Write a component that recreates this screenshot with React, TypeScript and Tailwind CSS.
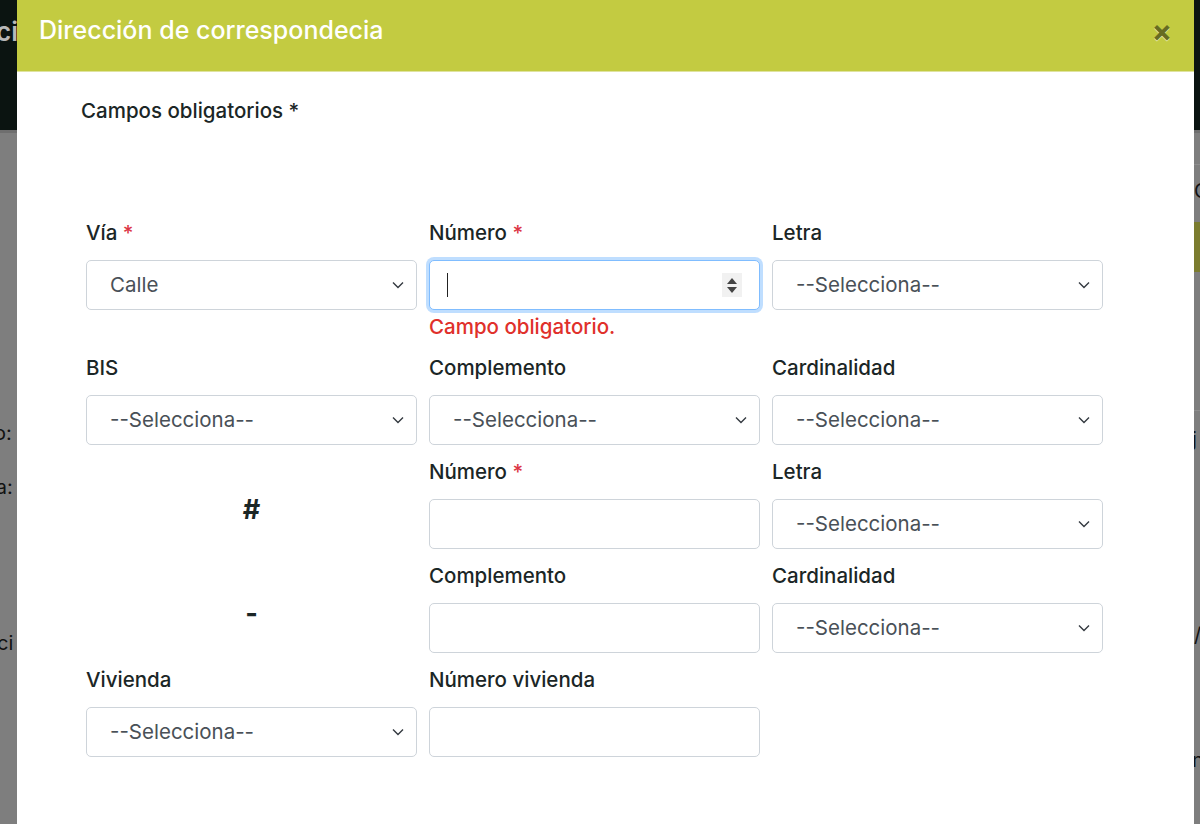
import React from 'react';

const font = { fontFamily: 'Inter, "Noto Sans", sans-serif' };

function Chevron() {
  return (
    <svg width="12" height="8" viewBox="0 0 12 8" className="absolute right-[12px] top-1/2 -translate-y-1/2">
      <path d="M1 1.5 L6 6.5 L11 1.5" fill="none" stroke="#343a40" strokeWidth="1.4" />
    </svg>
  );
}

function Select({ value = '--Selecciona--' }: { value?: string }) {
  return (
    <div className="relative h-[50px] rounded-[5px] border border-[#ced4da] bg-white flex items-center pl-[23px] text-[20.5px] text-[#495057]">
      {value}
      <Chevron />
    </div>
  );
}

function Input({ focused = false }: { focused?: boolean }) {
  if (focused) {
    return (
      <div className="relative h-[50px] rounded-[5px] border border-[#80bdff] bg-white shadow-[0_0_0_3px_rgba(0,123,255,0.25)] flex items-center pl-[17px]">
        <span className="w-[1px] h-[24px] bg-[#222]" />
        <span className="absolute right-[17px] top-1/2 -translate-y-1/2 w-[20px] h-[24px] bg-[#f1f1f1] flex flex-col items-center justify-center gap-[3px]">
          <span className="w-0 h-0 border-l-[5px] border-r-[5px] border-b-[6px] border-l-transparent border-r-transparent border-b-[#444]" />
          <span className="w-0 h-0 border-l-[5px] border-r-[5px] border-t-[6px] border-l-transparent border-r-transparent border-t-[#444]" />
        </span>
      </div>
    );
  }
  return <div className="h-[50px] rounded-[5px] border border-[#ced4da] bg-white" />;
}

function Label({ text, required = false }: { text: string; required?: boolean }) {
  return (
    <div className="h-[28px] leading-[28px] mb-[13px] text-[20.5px] font-medium text-[#1b2626]">
      {text}
      {required && <span className="text-[#dc3545]"> *</span>}
    </div>
  );
}

function Field({ label, required, children }: { label: string; required?: boolean; children: React.ReactNode }) {
  return (
    <div className="flex flex-col">
      <Label text={label} required={required} />
      {children}
    </div>
  );
}

function Symbol({ char }: { char: string }) {
  return (
    <div className="flex items-center justify-center pt-[14px] text-[27px] font-bold text-[#1b2626]">
      {char}
    </div>
  );
}

export default function App() {
  return (
    <div className="relative w-full h-[824px] overflow-hidden bg-[#7e7e7e]" style={font}>
      {/* dimmed page behind the modal */}
      <div className="h-[133px] bg-[#0b1411] border-b-[3px] border-[#6e6e6e] text-[26px] font-semibold text-[#b8b8b8] pt-[12px]">
        <span className="-ml-[4px]">ci</span>
      </div>
      <div className="absolute left-[-6px] top-[418px] text-[20px] text-[#111]">o:</div>
      <div className="absolute left-[-9px] top-[472px] text-[20px] text-[#111]">ia:</div>
      <div className="absolute left-[-3px] top-[628px] text-[20px] text-[#111]">ci</div>
      <div className="absolute left-[1194px] top-[135px] w-[6px] h-[30px] border-b border-[#8d8d8d]" />
      <div className="absolute left-[1194px] top-[176px] text-[20px] text-[#111]">O</div>
      <div className="absolute left-[1194px] top-[222px] w-[6px] h-[50px] bg-[#7b7c2f]" />
      <div className="absolute left-[1194px] top-[410px] w-[6px] border-b border-[#8d8d8d]" />
      <div className="absolute left-[1192px] top-[424px] text-[20px] text-[#111]">j</div>
      <div className="absolute left-[1194px] top-[620px] text-[20px] text-[#111]">/</div>
      <div className="absolute left-[1192px] top-[745px] text-[20px] text-[#111]">n</div>

      {/* modal */}
      <div className="absolute left-[17px] top-0 w-[1177px] h-[900px] bg-white">
        <div className="h-[72px] bg-[#c3cb41] border-b border-[#dfe3a0] flex items-center justify-between pl-[22px] pr-[22px] pb-[10px]">
          <span className="text-[25px] font-medium text-white">Dirección de correspondecia</span>
          <span className="text-[30px] font-bold leading-none text-[#676c22] [text-shadow:0_1px_0_#e9ecb0]">×</span>
        </div>
        <div className="pt-[25px] pl-[64px]">
          <div className="h-[28px] leading-[28px] text-[20.5px] font-medium text-[#1b2626]">Campos obligatorios *</div>
          <div className="mt-[94px] ml-[5px] grid grid-cols-[331px_331px_331px] gap-x-[12px] gap-y-[13px]">
            <Field label="Vía" required>
              <Select value="Calle" />
            </Field>
            <Field label="Número" required>
              <Input focused />
              <div className="mt-[5px] mb-[2px] leading-[24px] text-[20.5px] font-medium text-[#e0302b]">Campo obligatorio.</div>
            </Field>
            <Field label="Letra">
              <Select />
            </Field>

            <Field label="BIS">
              <Select />
            </Field>
            <Field label="Complemento">
              <Select />
            </Field>
            <Field label="Cardinalidad">
              <Select />
            </Field>

            <Symbol char="#" />
            <Field label="Número" required>
              <Input />
            </Field>
            <Field label="Letra">
              <Select />
            </Field>

            <Symbol char="-" />
            <Field label="Complemento">
              <Input />
            </Field>
            <Field label="Cardinalidad">
              <Select />
            </Field>

            <Field label="Vivienda">
              <Select />
            </Field>
            <Field label="Número vivienda">
              <Input />
            </Field>
          </div>
        </div>
      </div>
    </div>
  );
}
